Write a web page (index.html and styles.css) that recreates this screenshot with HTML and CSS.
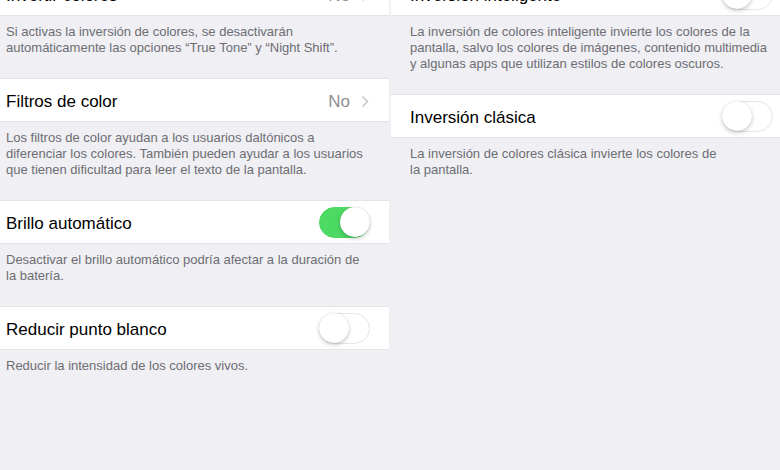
FILE: index.html
```html
<!DOCTYPE html>
<html lang="es">
<head>
    <meta charset="UTF-8">
    <meta name="viewport" content="width=device-width, initial-scale=1.0">
    <title>Adaptaciones de pantalla</title>
    <link rel="stylesheet" href="styles.css">
</head>
<body>
    <div class="screens">
        <!-- pantalla izquierda -->
        <div class="screen screen-left">
            <div class="cell">
                <span class="cell-title">Invertir colores</span>
                <span class="cell-value">No</span>
                <svg class="chevron" width="8" height="13" viewBox="0 0 8 13"><polyline points="1.5,1.5 6.5,6.5 1.5,11.5" fill="none" stroke="#c7c7cc" stroke-width="1.6"/></svg>
            </div>
            <div class="footer">Si activas la inversión de colores, se desactivarán<br>automáticamente las opciones “True Tone” y “Night Shift”.</div>

            <div class="cell">
                <span class="cell-title">Filtros de color</span>
                <span class="cell-value">No</span>
                <svg class="chevron" width="8" height="13" viewBox="0 0 8 13"><polyline points="1.5,1.5 6.5,6.5 1.5,11.5" fill="none" stroke="#c7c7cc" stroke-width="1.6"/></svg>
            </div>
            <div class="footer">Los filtros de color ayudan a los usuarios daltónicos a<br>diferenciar los colores. También pueden ayudar a los usuarios<br>que tienen dificultad para leer el texto de la pantalla.</div>

            <div class="cell">
                <span class="cell-title">Brillo automático</span>
                <span class="switch on"><span class="knob"></span></span>
            </div>
            <div class="footer">Desactivar el brillo automático podría afectar a la duración de<br>la batería.</div>

            <div class="cell">
                <span class="cell-title">Reducir punto blanco</span>
                <span class="switch"><span class="knob"></span></span>
            </div>
            <div class="footer">Reducir la intensidad de los colores vivos.</div>
        </div>

        <!-- pantalla derecha -->
        <div class="screen screen-right">
            <div class="cell">
                <span class="cell-title">Inversión inteligente</span>
                <span class="switch"><span class="knob"></span></span>
            </div>
            <div class="footer">La inversión de colores inteligente invierte los colores de la<br>pantalla, salvo los colores de imágenes, contenido multimedia<br>y algunas apps que utilizan estilos de colores oscuros.</div>

            <div class="cell">
                <span class="cell-title">Inversión clásica</span>
                <span class="switch"><span class="knob"></span></span>
            </div>
            <div class="footer">La inversión de colores clásica invierte los colores de<br>la pantalla.</div>
        </div>
    </div>
</body>
</html>
```

FILE: styles.css
```css
body {
    margin: 0;
    background: #efeff4;
    font-family: 'Liberation Sans', Arial, sans-serif;
    color: #000;
    height: 470px;
    overflow: hidden;
}

.screens {
    display: grid;
    grid-template-columns: 389px 389px;
    column-gap: 2px;
}

.screen {
    margin-top: -28px;
}

.cell {
    height: 42px;
    background: #fff;
    border-top: 1px solid #e3e3e8;
    border-bottom: 1px solid #e3e3e8;
    display: flex;
    align-items: center;
    font-size: 17px;
}

.screen-left .cell {
    padding: 0 19px 0 6px;
}

.screen-right .cell {
    padding: 0 7px 0 19px;
}

.cell-title {
    flex: 1;
    padding-top: 4px;
}

.cell-value {
    color: #8e8e93;
    margin-right: 11px;
    padding-top: 4px;
}

.chevron {
    display: block;
    margin-right: 1px;
    margin-top: 2px;
}

.footer {
    font-size: 13px;
    line-height: 16px;
    color: #6d6d72;
    padding-top: 8px;
    padding-bottom: 22px;
    white-space: nowrap;
}

.screen-left .footer {
    padding-left: 6px;
}

.screen-right .footer {
    padding-left: 19px;
}

/* interruptores */
.switch {
    position: relative;
    width: 51px;
    height: 31px;
    box-sizing: border-box;
    border-radius: 16px;
    background: #fff;
    border: 1.5px solid #e5e5ea;
}

.switch .knob {
    position: absolute;
    top: -1px;
    left: -1px;
    width: 30px;
    height: 30px;
    border-radius: 50%;
    background: #fff;
    box-shadow: 0 2px 4px rgba(0, 0, 0, 0.2), 0 0 1px rgba(0, 0, 0, 0.18);
}

.switch.on {
    background: #4cd964;
    border-color: #4cd964;
}

.switch.on .knob {
    left: auto;
    right: -1px;
}
```
